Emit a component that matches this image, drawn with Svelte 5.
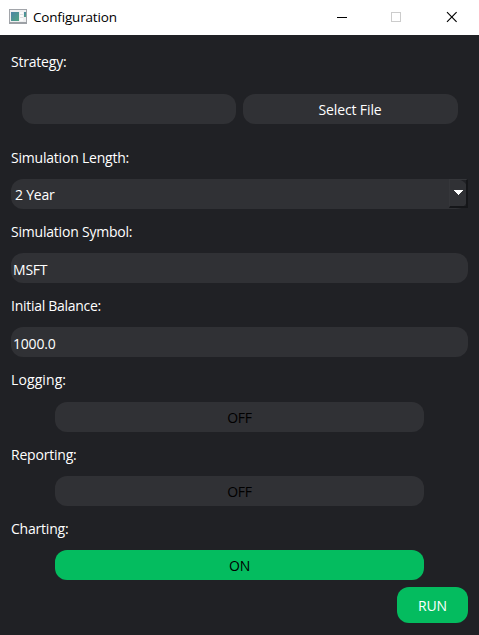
<script>
  let symbol = $state('MSFT');
  let balance = $state('1000.0');
  let toggles = $state([
    { name: 'Logging:', on: false },
    { name: 'Reporting:', on: false },
    { name: 'Charting:', on: true }
  ]);
</script>

<div class="window">
  <header>
    <svg class="app-icon" width="18" height="15" viewBox="0 0 18 15">
      <defs>
        <linearGradient id="screen" x1="0" y1="0" x2="1" y2="1">
          <stop offset="0" stop-color="#4b83a5" />
          <stop offset="1" stop-color="#50a582" />
        </linearGradient>
      </defs>
      <rect x="0.5" y="0.5" width="17" height="13" fill="#eeeff0" stroke="#a2a5aa" />
      <path d="M0 14.3H18" stroke="#858a90" />
      <rect x="2" y="3" width="8" height="9" fill="url(#screen)" />
      <rect x="11" y="3" width="3" height="9" fill="#fafafa" />
      <path d="M11 5.5H14M11 8.5H14" stroke="#dedfe1" />
      <rect x="15" y="3" width="2" height="5" fill="url(#screen)" />
    </svg>
    <span class="title">Configuration</span>
    <div class="controls">
      <svg width="46" height="34" viewBox="0 0 46 34" shape-rendering="crispEdges"><path d="M18 17.5H28" stroke="#000" /></svg>
      <svg width="54" height="34" viewBox="0 0 54 34" shape-rendering="crispEdges"><rect x="26.5" y="12.5" width="9" height="9" fill="none" stroke="#ccc" /></svg>
      <svg width="54" height="34" viewBox="0 0 54 34"><path d="M28 12.2L37.6 21.8M37.6 12.2L28 21.8" stroke="#000" stroke-width="1.15" /></svg>
    </div>
  </header>

  <main>
    <div class="label first"><span>Strategy:</span></div>
    <div class="files">
      <div class="field"></div>
      <button class="field select-file">Select File</button>
    </div>
    <div class="label"><span>Simulation Length:</span></div>
    <div class="field combo">
      <span>2 Year</span>
      <div class="drop">
        <svg width="9" height="5" viewBox="0 0 9 5" shape-rendering="crispEdges"><path d="M0 0H9V1H8V2H7V3H6V4H5V5H4V4H3V3H2V2H1V1H0Z" fill="#fff" /></svg>
      </div>
    </div>
    <div class="label"><span>Simulation Symbol:</span></div>
    <input class="field" bind:value={symbol} />
    <div class="label"><span class="balance">Initial Balance:</span></div>
    <input class="field" bind:value={balance} />
    {#each toggles as toggle, i}
      <div class="label" class:tall={i === 0}><span class:loose={i === 0}>{toggle.name}</span></div>
      <button class="field toggle" class:on={toggle.on} onclick={() => (toggle.on = !toggle.on)}>{toggle.on ? 'ON' : 'OFF'}</button>
    {/each}
    <button class="run">RUN</button>
  </main>
</div>

<style>
  .window {
    width: 479px;
    height: 635px;
    overflow: hidden;
    background: #202125;
    color: #fff;
    font: 14px/20px "Open Sans", "Noto Sans", sans-serif;
    letter-spacing: -0.21px;
  }
  header {
    display: flex;
    height: 35px;
    box-sizing: border-box;
    background: #fff;
    color: #000;
    padding: 0 6px 0 9px;
  }
  .app-icon { margin-top: 9px; }
  .title { margin: 7px 0 0 6px; font-size: 13.5px; letter-spacing: -0.18px; }
  .controls { display: flex; margin-left: auto; }
  main {
    display: flex;
    flex-direction: column;
    padding: 5px 11px 0;
  }
  .label {
    display: flex;
    align-items: center;
    height: 44px;
    padding-top: 1px;
    box-sizing: border-box;
    flex: none;
  }
  .first { padding: 0 0 1px; margin-bottom: 10px; }
  .tall { height: 45px; }
  .balance { letter-spacing: -0.28px; }
  .loose { letter-spacing: 0.1px; }
  .field {
    display: block;
    box-sizing: border-box;
    height: 30px;
    border: 0;
    border-radius: 12px;
    background: #303135;
    color: #fff;
    font: inherit;
    letter-spacing: inherit;
    outline: none;
  }
  .files {
    display: grid;
    grid-template-columns: 214px 215px;
    column-gap: 7px;
    padding: 0 11px;
    margin-bottom: 11px;
  }
  button { padding: 1px 0 0; }
  .select-file { padding: 2px 1px 0 0; letter-spacing: -0.12px; }
  input.field { width: 100%; padding: 3px 2px 0; }
  .combo {
    display: flex;
    justify-content: space-between;
    padding-left: 4px;
  }
  .combo span { padding-top: 6px; }
  .drop {
    width: 19px;
    height: 29px;
    box-sizing: border-box;
    border: 1px solid #35363a;
    border-right: 2px solid #151619;
    border-bottom: 2px solid #151619;
    padding: 10px 0 0 4px;
  }
  .drop svg { display: block; }
  .toggle { margin: 0 44px; color: #000; }
  .toggle.on { background: #04bc5f; }
  .run {
    align-self: flex-end;
    width: 71px;
    height: 36px;
    margin-top: 7px;
    border: 0;
    border-radius: 12px;
    background: #04bc5f;
    color: #fff;
    font: inherit;
    letter-spacing: -0.1px;
  }
</style>
